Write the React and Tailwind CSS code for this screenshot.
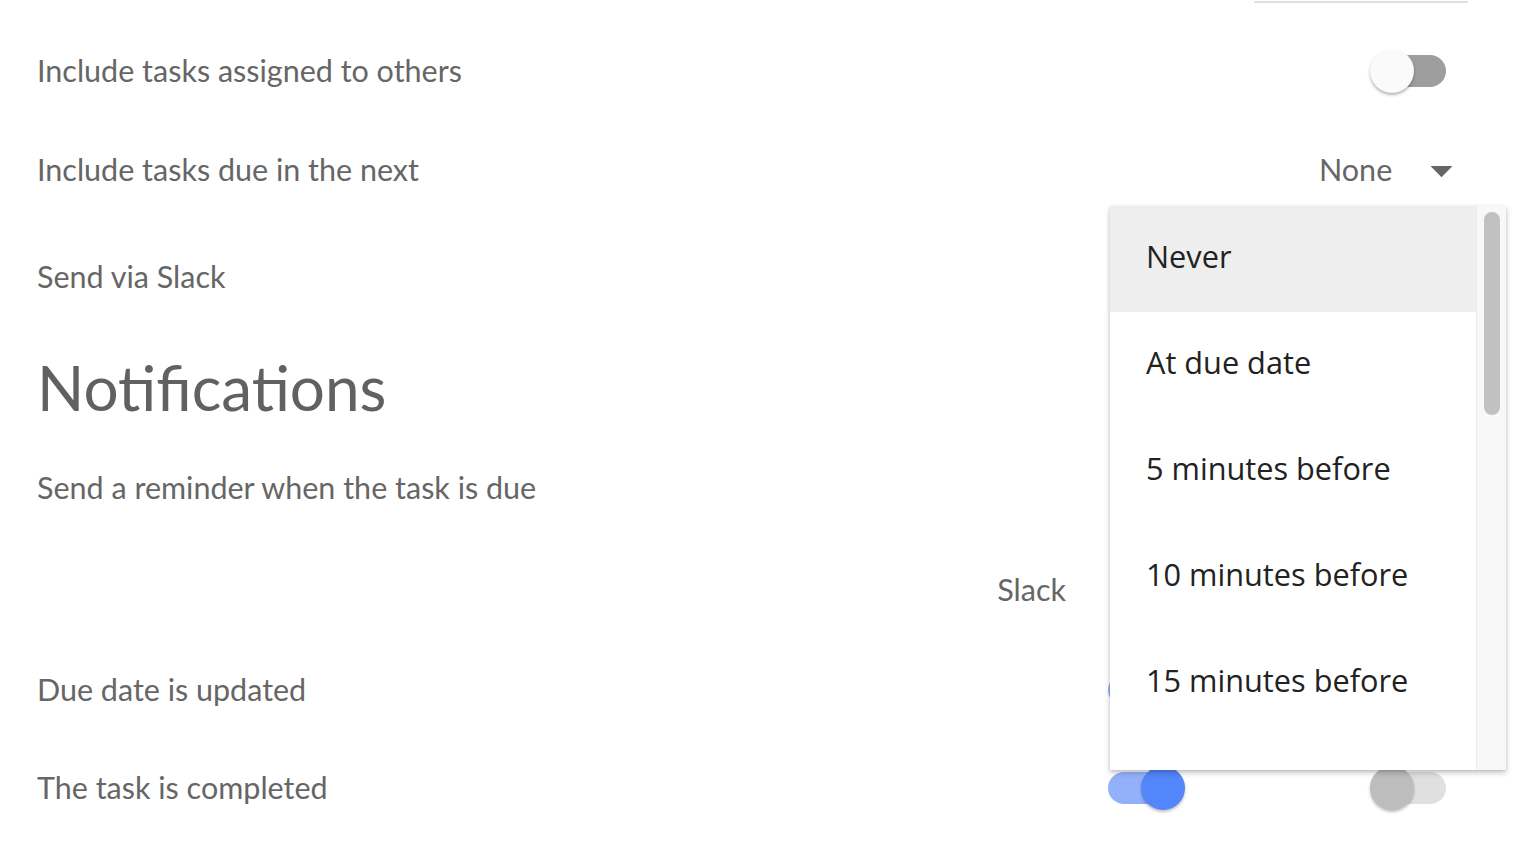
import React from "react";

const lato = { fontFamily: "Lato, 'Open Sans', sans-serif" };
const open = { fontFamily: "'Open Sans', Lato, sans-serif" };

function Switch({ checked, mr = "" }) {
  return (
    <div className={`relative h-[44px] w-[78px] shrink-0 ${mr}`}>
      <div
        className={`absolute right-0 top-[6px] h-[32px] rounded-full ${
          checked ? "left-[2px] bg-[#93b1fb]" : "left-[4px] bg-[#e0e0e0]"
        }`}
      />
      <div
        className={`absolute top-0 h-[44px] w-[44px] rounded-full shadow-[0_2px_3px_rgba(0,0,0,0.25)] ${
          checked ? "right-[-1px] bg-[#5286fa]" : "left-[2px] bg-[#bdbdbd]"
        }`}
      />
    </div>
  );
}

function SwitchOff() {
  return (
    <div className="relative mr-[22px] h-[44px] w-[76px] shrink-0">
      <div className="absolute left-[2px] right-0 top-[6px] h-[32px] rounded-full bg-[#9e9e9e]" />
      <div className="absolute left-0 top-0 h-[44px] w-[44px] rounded-full bg-[#fafafa] shadow-[0_2px_3px_rgba(0,0,0,0.3)]" />
    </div>
  );
}

const items = ["Never", "At due date", "5 minutes before", "10 minutes before", "15 minutes before"];

function Menu() {
  return (
    <div className="absolute left-[1110px] top-[206px] flex h-[564px] w-[396px] overflow-hidden bg-white shadow-[0_3px_6px_rgba(0,0,0,0.2),0_1px_3px_rgba(0,0,0,0.12)]">
      <div className="flex w-[366px] flex-col">
        {items.map((t, i) => (
          <div
            key={t}
            style={open}
            className={`flex h-[106px] shrink-0 items-center pb-[6px] pl-[36px] text-[30.7px] text-[#222] ${
              i === 0 ? "bg-[#eeeeee]" : ""
            }`}
          >
            {t}
          </div>
        ))}
      </div>
      <div className="flex w-[30px] justify-center border-l border-[#ececec] bg-[#f8f8f8] pt-[6px]">
        <div className="h-[203px] w-[16px] rounded-full bg-[#c1c1c1]" />
      </div>
    </div>
  );
}

export default function App() {
  const label = "text-[30.5px] text-[#666666]";
  return (
    <div className="relative h-[856px] w-[1538px] overflow-hidden bg-white" style={lato}>
      <div className="flex flex-col pl-[37px] pr-[70px]">
        <div className="flex h-[4px] justify-end">
          <div className="mt-[1px] h-[2px] w-[214px] bg-[#e0e0e0]" />
        </div>

        <div className="flex h-[134px] items-center justify-between">
          <span className={label}>Include tasks assigned to others</span>
          <SwitchOff />
        </div>

        <div className="flex h-[64px] items-center justify-between">
          <span className={label}>Include tasks due in the next</span>
          <div className="flex w-[214px] items-center justify-between pl-[65px]">
            <span className="text-[30.5px] text-[#666666]">None</span>
            <svg viewBox="0 0 24 24" className="h-[53px] w-[53px] fill-[#666666]">
              <path d="M7 10l5 5 5-5z" />
            </svg>
          </div>
        </div>

        <div className="flex h-[150px] items-center justify-between">
          <span className={label}>Send via Slack</span>
          <Switch checked={false} mr="mr-[22px]" />
        </div>

        <div className="flex h-[71px] items-center">
          <h1 className="text-[62px] text-[#616161]">Notifications</h1>
        </div>

        <div className="flex h-[130px] items-center">
          <span className={label}>Send a reminder when the task is due</span>
        </div>

        <div className="flex h-[74px] items-center justify-end">
          <span className="mr-[402px] text-[30.5px] text-[#666666]">Slack</span>
        </div>

        <div className="flex h-[126px] items-center justify-between">
          <span className={label}>Due date is updated</span>
          <div className="flex items-center gap-[184px] pr-[22px]">
            <Switch checked />
            <Switch checked={false} />
          </div>
        </div>

        <div className="flex h-[70px] items-center justify-between">
          <span className={label}>The task is completed</span>
          <div className="flex items-center gap-[184px] pr-[22px]">
            <Switch checked />
            <Switch checked={false} />
          </div>
        </div>
      </div>
      <Menu />
    </div>
  );
}
